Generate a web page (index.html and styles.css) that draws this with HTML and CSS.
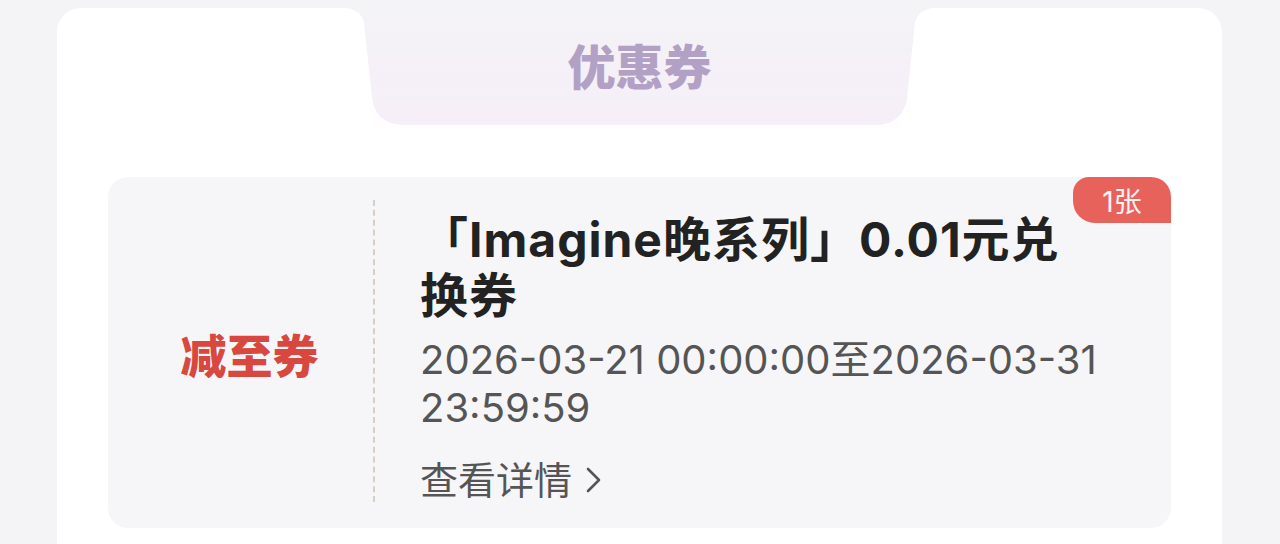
FILE: index.html
```html
<!DOCTYPE html>
<html lang="zh-CN">
<head>
    <meta charset="UTF-8">
    <meta name="viewport" content="width=device-width, initial-scale=1.0">
    <title>优惠券</title>
    <link rel="stylesheet" href="styles.css">
</head>
<body>
    <div class="panel">
        <div class="tab">
            <svg class="tab-bg" viewBox="0 0 585 117" preserveAspectRatio="none">
                <defs>
                    <linearGradient id="tabFill" x1="0" y1="0" x2="0" y2="1">
                        <stop offset="0" stop-color="#f4f3f6"/>
                        <stop offset="1" stop-color="#f6eef8"/>
                    </linearGradient>
                </defs>
                <path d="M0 0 H585 Q572 2 568 14 L560 90 Q556 117 528 117 H57 Q29 117 25 90 L17 14 Q13 2 0 0 Z" fill="url(#tabFill)"/>
            </svg>
            <h1>优惠券</h1>
        </div>

        <div class="coupon">
            <div class="coupon-type">减至券</div>
            <div class="coupon-divider"></div>
            <div class="coupon-info">
                <div class="coupon-title">「Imagine晚系列」0.01元兑换券</div>
                <div class="coupon-date">2026-03-21 00:00:00至2026-03-31 23:59:59</div>
                <div class="coupon-link">查看详情 <span class="chev">
                    <svg width="20" height="30" viewBox="0 0 20 30"><path d="M4 4 L15 15 L4 26" fill="none" stroke="#555" stroke-width="2.6" stroke-linecap="round" stroke-linejoin="round"/></svg>
                </span></div>
            </div>
            <div class="badge">1张</div>
        </div>
    </div>
</body>
</html>
```

FILE: styles.css
```css
body {
    margin: 0;
    background: #f4f4f6;
    font-family: Inter, "Noto Sans CJK SC", sans-serif;
}
.panel {
    margin: 8px 58px 0 57px;
    background: #fff;
    border-radius: 24px 24px 0 0;
    padding: 0 51px 40px;
    min-height: 496px;
}
.tab {
    position: relative;
    width: 585px;
    height: 117px;
    margin: 0 auto;
    display: flex;
    align-items: center;
    justify-content: center;
}
.tab-bg {
    position: absolute;
    left: 0;
    top: 0;
    width: 100%;
    height: 100%;
}
.tab h1 {
    position: relative;
    margin: 0 0 6px;
    font-family: "Noto Sans CJK SC", sans-serif;
    font-size: 48px;
    font-weight: 900;
    color: #b2a1c5;
}
.coupon {
    position: relative;
    margin-top: 52px;
    height: 351px;
    background: #f6f6f8;
    border-radius: 20px;
    display: flex;
}
.coupon-type {
    width: 265px;
    padding-left: 18px;
    box-sizing: border-box;
    display: flex;
    align-items: center;
    justify-content: center;
    font-family: "Noto Sans CJK SC", sans-serif;
    font-size: 46px;
    font-weight: 900;
    color: #d8483f;
}
.coupon-divider {
    margin: 23px 0 26px;
    border-left: 2px dashed #d8cfc2;
}
.coupon-info {
    flex: 1;
    padding: 35px 60px 0 45px;
}
.coupon-title {
    max-width: 680px;
    font-size: 48px;
    line-height: 56px;
    font-weight: 700;
    letter-spacing: 1px;
    color: #222;
}
.coupon-date {
    margin-top: 12px;
    font-size: 40px;
    line-height: 48px;
    color: #555;
}
.coupon-link {
    margin-top: 24px;
    font-size: 38px;
    line-height: 48px;
    color: #555;
    display: flex;
    align-items: center;
}
.chev {
    display: inline-flex;
    margin-left: 12px;
}
.badge {
    position: absolute;
    top: 0;
    right: 0;
    width: 98px;
    height: 46px;
    background: #e8625c;
    color: #fff2f2;
    font-size: 28px;
    display: flex;
    align-items: center;
    justify-content: center;
    border-radius: 16px 20px 0 22px;
}
```
